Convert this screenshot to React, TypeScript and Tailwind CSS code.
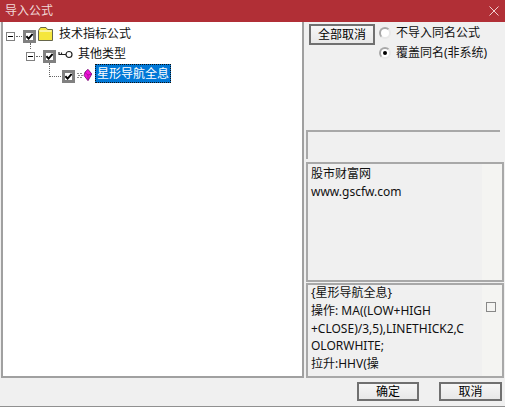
import type { ReactNode } from 'react';

const cjk = '[font-family:"Noto_Sans","Noto_Sans_CJK_SC",sans-serif]';

function Check() {
  return (
    <div className="flex h-[13px] w-[13px] shrink-0 items-center justify-center border-[3px] border-[#808080] bg-white">
      <svg width="7" height="7" viewBox="0 0 7 7" className="shrink-0">
        <path d="M.4 3.2 L2.6 5.6 L6.7 .9" fill="none" stroke="#000" strokeWidth="1.9" />
      </svg>
    </div>
  );
}

function Expander() {
  return (
    <div className="flex h-[9px] w-[9px] shrink-0 items-center justify-center border border-[#808080] bg-white">
      <div className="h-px w-[5px] bg-black" />
    </div>
  );
}

function Folder() {
  return (
    <svg width="16" height="14" viewBox="0 0 16 14" className="mb-[4px] shrink-0">
      <path d="M.5 3.5 L2.5 .5 H8 L9.5 2.5 H14.5 V13.5 H.5 Z" fill="#f5e63c" stroke="#66664a" />
      <path d="M1.5 4 H13.5" stroke="#fff" />
    </svg>
  );
}

function KeyIcon() {
  return (
    <svg width="15" height="9" viewBox="0 0 15 9" className="mb-[4px] shrink-0">
      <circle cx="11" cy="4.5" r="3" fill="#fff" stroke="#222" strokeWidth="1.2" />
      <path d="M8 4.5 H.5 M1 2 V4.5 M3.5 2.5 V4.5" stroke="#222" strokeWidth="1.2" fill="none" />
    </svg>
  );
}

function Gem() {
  return (
    <svg width="15" height="12" viewBox="0 0 15 12" className="mb-[3px] shrink-0">
      <path d="M0 4.5 H6 M1 6.5 H6 M0 8.5 H6" stroke="#8a8a8a" strokeDasharray="2 1" />
      <path d="M11 .3 L14.8 5 L11 11.7 L7 6.5 L8 3 Z" fill="#f012d8" stroke="#701070" strokeWidth=".8" />
      <path d="M8 3.5 L11 6 L14.5 5 M11 6 V11" fill="none" stroke="#8a0a80" strokeWidth=".6" />
    </svg>
  );
}

// one row of the tree, depth moves it 19px to the right
function TreeRow({ depth, expander, icon, children }: { depth: 0 | 1 | 2; expander: boolean; icon: ReactNode; children: ReactNode }) {
  const indent = depth === 0 ? 'pl-0' : depth === 1 ? 'pl-[20px]' : 'pl-[39px]';
  return (
    <div className={`flex h-5 items-center ${indent}`}>
      <div className="relative flex w-[17px] shrink-0 items-center">
        {expander ? <Expander /> : null}
        {expander ? <div className="ml-px w-[6px] border-t border-dotted border-[#666]" /> : null}
      </div>
      <Check />
      <div className="ml-[2px] flex h-5 items-center">{icon}</div>
      {children}
    </div>
  );
}

function Radio({ on }: { on?: boolean }) {
  return (
    <div className="flex h-[12px] w-[12px] shrink-0 items-center justify-center rounded-full border-2 border-[#a8a8a8] border-r-[#e8e8e8] border-b-[#e8e8e8] bg-white">
      {on ? <div className="h-[4px] w-[4px] shrink-0 rounded-full bg-black" /> : null}
    </div>
  );
}

function Btn({ className, children }: { className: string; children: ReactNode }) {
  return (
    <button className={`flex items-center justify-center border-2 border-[#707070] bg-gradient-to-b from-[#f6f6f6] to-[#e8e8e8] text-[12px] leading-none text-black ${className}`}>
      {children}
    </button>
  );
}

export default function App() {
  return (
    <div className={`flex h-[407px] w-[505px] flex-col overflow-hidden border-b border-[#909090] bg-[#f0f0f0] text-[12px] text-[#111] ${cjk}`}>
      <div className="flex h-[22px] shrink-0 items-center justify-between bg-[#b12f36] pl-[5px] pr-[6px] text-[12px] text-[#f0d8d8]">
        <span>导入公式</span>
        <svg width="10" height="10" viewBox="0 0 10 10">
          <path d="M.5 .5 L9.5 9.5 M9.5 .5 L.5 9.5" stroke="#f0d0d0" />
        </svg>
      </div>

      <div className="flex h-[356px] shrink-0 pl-px">
        <div className="relative w-[303px] shrink-0 border-x-2 border-b-2 border-[#a0a0a0] bg-white pt-[4px] pl-[3px]">
          <div className="absolute left-[27px] top-[21px] h-[6px] border-l border-dotted border-[#666]" />
          <div className="absolute left-[46px] top-[41px] h-[14px] w-[12px] border-b border-l border-dotted border-[#666]" />
          <TreeRow depth={0} expander icon={<Folder />}>
            <span className="mb-[4px] ml-[5px] text-[12px]">技术指标公式</span>
          </TreeRow>
          <TreeRow depth={1} expander icon={<KeyIcon />}>
            <span className="mb-[4px] ml-[5px] text-[12px]">其他类型</span>
          </TreeRow>
          <TreeRow depth={2} expander={false} icon={<Gem />}>
            <span className="mb-[5px] ml-[3px] border border-dotted border-[#111] bg-[#0078d7] px-px text-[12px] leading-[17px] text-white">星形导航全息</span>
          </TreeRow>
        </div>

        <div className="flex min-w-0 flex-1 flex-col pl-[2px] pr-[1px]">
          <div className="flex h-[108px] shrink-0 items-start pl-[3px] pt-[2px]">
            <Btn className="h-[21px] w-[66px]">全部取消</Btn>
            <div className="ml-[4px] flex flex-col gap-[8px] pt-[3px]">
              <div className="flex h-3 items-center gap-[5px]"><Radio /><span>不导入同名公式</span></div>
              <div className="flex h-3 items-center gap-[5px]"><Radio on /><span>覆盖同名(非系统)</span></div>
            </div>
          </div>
          <div className="h-[29px] w-[194px] shrink-0 border-t-2 border-l-2 border-[#a8a8a8] border-b-white border-r-white bg-[#f0f0f0]" />
          <div className="mt-[3px] flex h-[120px] shrink-0 border-2 border-[#a8a8a8]">
            <div className="w-[174px] shrink-0 pl-[3px] pt-[1px] leading-[18px]">
              <div>股市财富网</div>
              <div>www.gscfw.com</div>
            </div>
            <div className="flex-1 bg-[#f4f4f2]" />
          </div>
          <div className="mt-[1px] flex h-[95px] shrink-0 border-2 border-[#a8a8a8]">
            <div className="w-[174px] shrink-0 break-all pl-[3px] leading-[17.75px]">
              <div className="-mt-px">{'{星形导航全息}'}</div>
              <div>操作: MA((LOW+HIGH</div>
              <div>+CLOSE)/3,5),LINETHICK2,C</div>
              <div>OLORWHITE;</div>
              <div>拉升:HHV(操</div>
            </div>
            <div className="flex-1 bg-[#f4f4f2] pl-[4px] pt-[17px]">
              <div className="h-[10px] w-[10px] border border-[#888] bg-[#f4f4f2]" />
            </div>
          </div>
        </div>
      </div>

      <div className="flex flex-1 items-start justify-end gap-[20px] pr-[3px] pt-[4px]">
        <Btn className="h-[19px] w-[62px]">确定</Btn>
        <Btn className="h-[19px] w-[63px]">取消</Btn>
      </div>
    </div>
  );
}
